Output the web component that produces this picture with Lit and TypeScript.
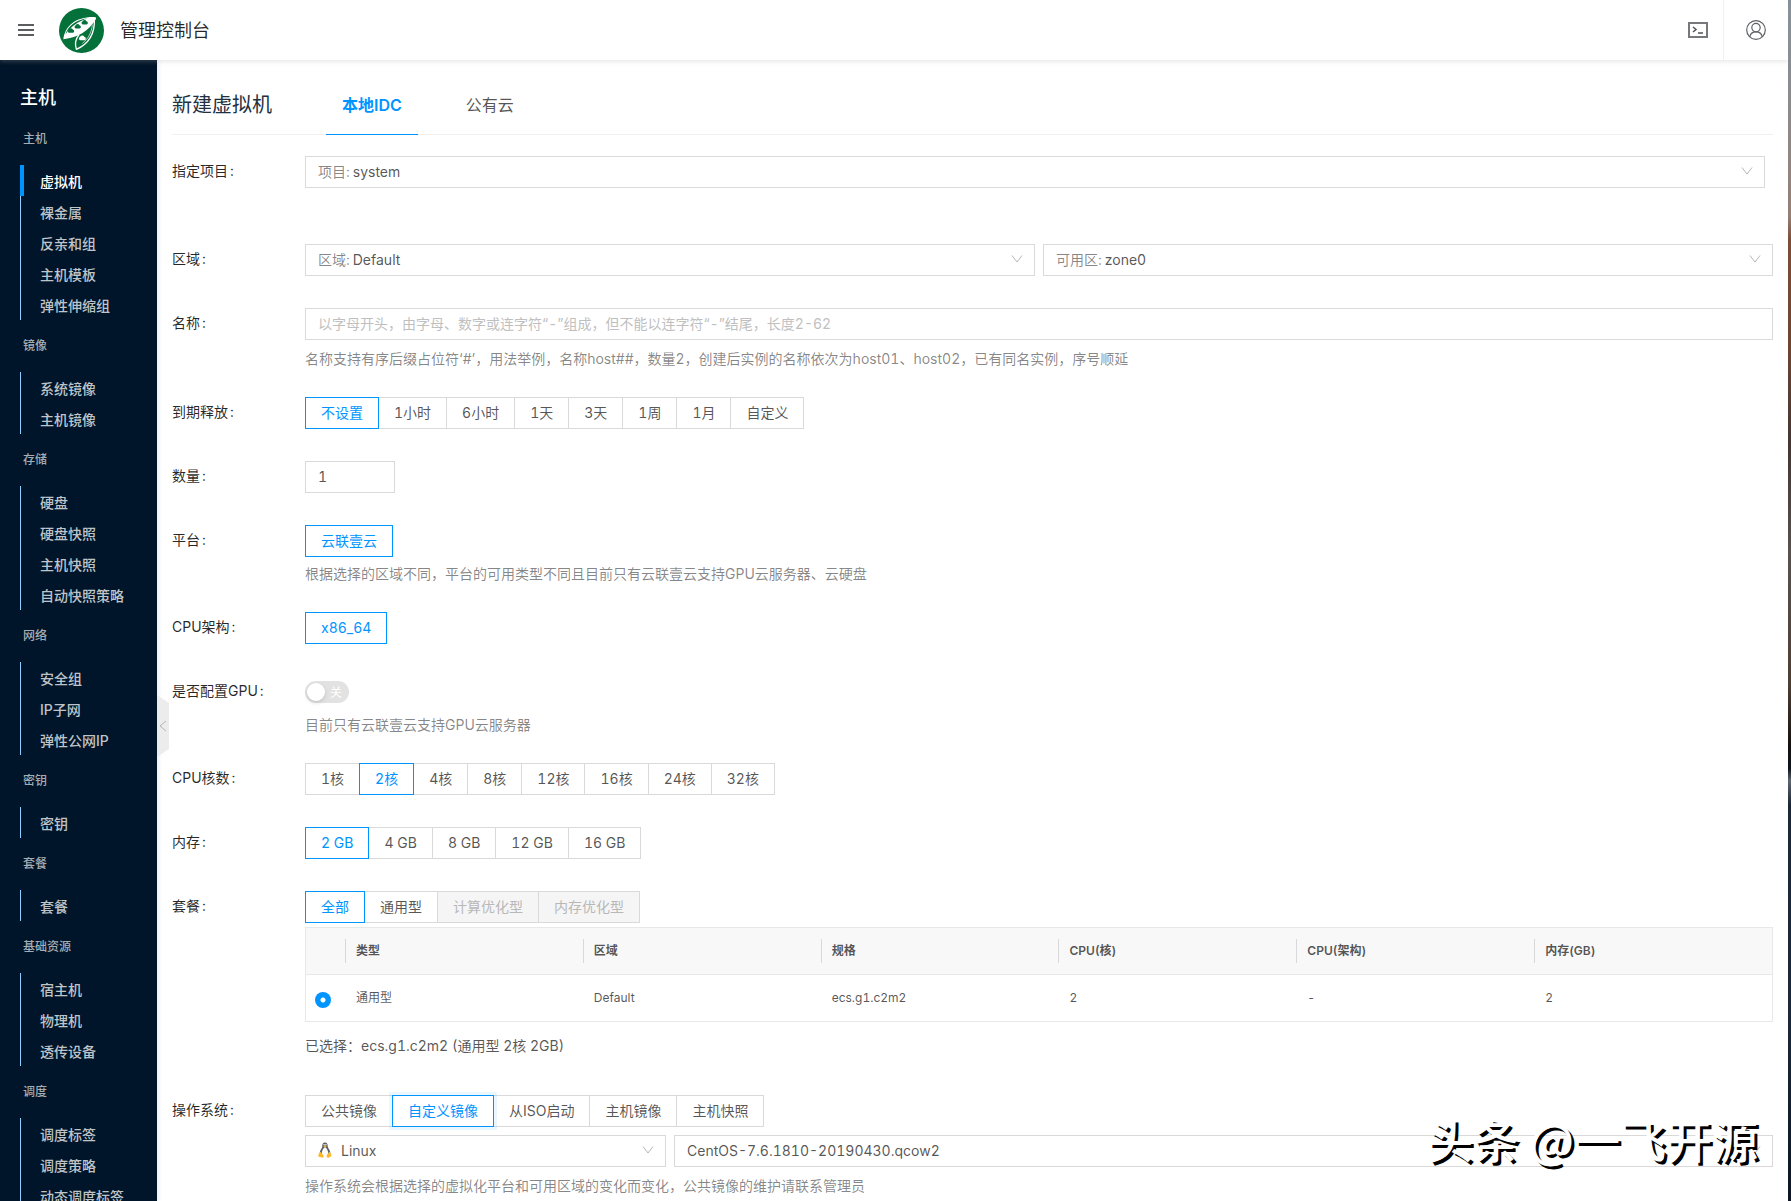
import { LitElement, html, css, svg, nothing, TemplateResult } from "lit";
import { customElement, state } from "lit/decorators.js";
import { classMap } from "lit/directives/class-map.js";

interface MenuGroup {
  title: string;
  items: string[];
}

interface Option {
  label: string;
  disabled?: boolean;
}

const MENU: MenuGroup[] = [
  { title: "主机", items: ["虚拟机", "裸金属", "反亲和组", "主机模板", "弹性伸缩组"] },
  { title: "镜像", items: ["系统镜像", "主机镜像"] },
  { title: "存储", items: ["硬盘", "硬盘快照", "主机快照", "自动快照策略"] },
  { title: "网络", items: ["安全组", "IP子网", "弹性公网IP"] },
  { title: "密钥", items: ["密钥"] },
  { title: "套餐", items: ["套餐"] },
  { title: "基础资源", items: ["宿主机", "物理机", "透传设备"] },
  { title: "调度", items: ["调度标签", "调度策略", "动态调度标签"] },
];

const toOptions = (...labels: string[]): Option[] => labels.map((label) => ({ label }));

const RELEASE = toOptions("不设置", "1小时", "6小时", "1天", "3天", "1周", "1月", "自定义");
const CORES = toOptions("1核", "2核", "4核", "8核", "12核", "16核", "24核", "32核");
const MEMORY = toOptions("2 GB", "4 GB", "8 GB", "12 GB", "16 GB");
const FLAVOR: Option[] = [
  { label: "全部" },
  { label: "通用型" },
  { label: "计算优化型", disabled: true },
  { label: "内存优化型", disabled: true },
];
const OS_SOURCE = toOptions("公共镜像", "自定义镜像", "从ISO启动", "主机镜像", "主机快照");

const COLUMNS = ["类型", "区域", "规格", "CPU(核)", "CPU(架构)", "内存(GB)"];
const SKU = ["通用型", "Default", "ecs.g1.c2m2", "2", "-", "2"];

const chevron = html`<svg class="chevron" viewBox="0 0 12 12" aria-hidden="true">
  <path d="M1 2.500 6 9l5-6.500" fill="none" stroke="currentColor" stroke-width="1" />
</svg>`;

const cloud = (x: number, y: number, fill: string, s = 1) => svg`
  <path transform="translate(${x} ${y}) scale(${s})" fill=${fill}
    d="M-5 5a4.500 4.500 0 0 1-1-8.500A6 6 0 0 1 5-4 4.800 4.800 0 0 1 6 5z" />`;

const logo = html`<svg class="logo" viewBox="28 24 135 135" aria-hidden="true">
  <circle cx="95.500" cy="91.500" r="67.500" fill="#04713a" />
  <path d="M41 118C46 78 78 50 133 51c7 0 8 3 4 9-20 32-50 52-96 58z" fill="#fff" />
  <path d="M47 104c8-26 32-44 67-49-28 9-50 24-67 49z" fill="#04713a" />
  ${cloud(64, 93, "#04713a", 1.1)}${cloud(84, 80, "#04713a", 1.1)}${cloud(105, 68, "#04713a", 1.1)}
  <path d="M134 56c2 40-14 74-54 92-5-16-3-30 8-44" fill="none" stroke="#fff" stroke-width="4" stroke-linejoin="round" />
  <path d="M128 74c-2 24-12 42-30 56" fill="none" stroke="#fff" stroke-width="2" />
  ${cloud(98, 115, "#fff", 1.2)}
</svg>`;

const tux = html`<svg class="tux" viewBox="0 0 14 16" aria-hidden="true">
  <path d="M7 .5C5 .5 4.200 2 4.300 3.700c.1 2-.8 2.700-1.700 4.300C1.500 10 1.500 12 2.500 14h9c1-2 1-4 0-6-1-1.700-1.800-2.400-1.800-4.200C9.700 1.800 9 .5 7 .5z" fill="#5b6068" />
  <path d="M7 5C5.500 6 3.800 8.500 3.800 11c0 2 1.200 3.500 3.200 3.500s3.200-1.500 3.200-3.500C10.200 8.500 8.500 6 7 5z" fill="#fafafa" />
  <path d="M5.200 4.200 7 3.300l1.800.9L7 5.600z" fill="#f5a623" />
  <circle cx="6.100" cy="2.700" r=".7" fill="#fff" /><circle cx="7.900" cy="2.700" r=".7" fill="#fff" />
  <path d="M2.500 9.800 5.500 13.500c.6 1.400-.4 2.400-1.700 2.100L.9 14.800c-.9-.3-.6-1.100-.4-1.700.2-1.200.4-2 2-3.300zM11.600 9.800 9 12.800c-.8 1.300-.3 2.900 1 2.900 1.200 0 1.800-.9 3-1.300.9-.4.7-1.200.2-1.700-.4-.7-.5-2-1.600-2.900z" fill="#fbb829" />
</svg>`;

@customElement("app-root")
export class AppRoot extends LitElement {
  @state() private picked: Record<string, string> = {
    release: "不设置",
    platform: "云联壹云",
    arch: "x86_64",
    cores: "2核",
    memory: "2 GB",
    flavor: "全部",
    os: "自定义镜像",
  };
  @state() private tab = "本地IDC";
  @state() private current = "虚拟机";

  static styles = css`
    :host {
      --primary: #0094ff;
      --line: #d9d9d9;
      --text: rgba(0, 0, 0, 0.68);
      --strong: rgba(0, 0, 0, 0.85);
      --muted: rgba(0, 0, 0, 0.48);
      display: flex;
      flex-direction: column;
      position: relative;
      height: 100vh;
      overflow: hidden;
      box-sizing: border-box;
      padding-right: 3px;
      background: #fff;
      color: var(--text);
      font-family: Inter, "Noto Sans CJK SC", sans-serif;
      font-size: 14px;
      line-height: 21px;
      font-variant-numeric: tabular-nums;
    }
    * {
      box-sizing: border-box;
    }
    button,
    input,
    select {
      font: inherit;
      font-variant-numeric: tabular-nums;
      color: inherit;
      margin: 0;
      padding: 0;
      border: 0;
      border-radius: 0;
      background: none;
      outline: 0;
    }
    a {
      color: inherit;
      text-decoration: none;
    }
    h1,
    h2,
    h3,
    p,
    ul {
      margin: 0;
      padding: 0;
      font-weight: 400;
      list-style: none;
    }
    .edge {
      position: absolute;
      inset: 0 0 0 auto;
      width: 3px;
      background: linear-gradient(
        #83909a 0%,
        #8d8a8a 10%,
        #967f74 18%,
        #7d4d36 20%,
        #6e4430 29%,
        #433633 37%,
        #57514f 46%,
        #4d3e33 57%,
        #15120f 62%,
        #0e141c 64%,
        #5d676f 65%,
        #1b2737 67%,
        #1b293b 84%,
        #0b1523 100%
      );
    }

    .header {
      display: flex;
      align-items: center;
      flex: none;
      height: 60px;
      z-index: 2;
      background: #fff;
      box-shadow: 0 2px 4px rgba(170, 170, 170, 0.25);
    }
    .header button {
      display: flex;
      align-items: center;
      justify-content: center;
      height: 60px;
    }
    .burger {
      width: 52px;
      color: #5c5d5f;
    }
    .burger svg {
      width: 16px;
      height: 12px;
    }
    .logo {
      width: 45px;
      height: 45px;
      margin: 0 16px 0 7px;
    }
    .brand {
      flex: 1;
      font-size: 18px;
      color: var(--strong);
    }
    .console {
      width: 50px;
    }
    .console svg {
      width: 20px;
      height: 16px;
    }
    .user {
      width: 65px;
      border-left: 1px solid #f0f0f0;
      color: #606266;
    }
    .user svg {
      width: 20px;
      height: 20px;
    }

    .body {
      display: flex;
      flex: 1;
      min-height: 0;
    }
    .sidebar {
      flex: none;
      width: 157px;
      padding: 22px 0 0 20px;
      overflow: hidden;
      background: #001529;
      color: #bfc4c9;
      box-shadow: 2px 0 4px rgba(0, 80, 160, 0.08);
    }
    .sidebar h2 {
      font-size: 18px;
      line-height: 31px;
      font-weight: 500;
      color: #fff;
    }
    .sidebar h3 {
      padding: 16px 3px;
      font-size: 12px;
      line-height: 20px;
      font-weight: 500;
      color: #a5adb4;
    }
    .sidebar a {
      display: block;
      padding: 2px 0 0 19px;
      border-left: 1px solid #8ccfff;
      line-height: 29px;
      font-weight: 500;
    }
    .sidebar a.active {
      padding-left: 16px;
      border-left: 4px solid var(--primary);
      color: #fff;
    }

    .rail {
      flex: none;
      align-self: center;
      width: 12px;
      height: 62px;
      margin-top: 190px;
      color: #b5b5b5;
    }
    .rail svg {
      display: block;
      width: 12px;
      height: 62px;
    }
    .main {
      flex: 1;
      min-width: 0;
      overflow-y: auto;
      scrollbar-width: none;
      padding: 16px 15px 0 3px;
    }
    .title {
      display: flex;
      height: 59px;
      margin-bottom: 17px;
      border-bottom: 1px solid #f0f0f0;
    }
    .title h1 {
      width: 154px;
      font-size: 20px;
      line-height: 58px;
      color: #22313f;
    }
    .tabs {
      display: flex;
      gap: 32px;
    }
    .tabs button {
      height: 59px;
      padding: 0 16px;
      font-size: 16px;
      border-bottom: 1px solid transparent;
    }
    .tabs button.active {
      font-weight: 600;
      color: var(--primary);
      border-bottom-color: var(--primary);
    }

    .row {
      display: grid;
      grid-template-columns: 133px minmax(0, 1fr);
      margin-bottom: 24px;
    }
    .row.wide {
      margin-bottom: 48px;
    }
    .row.wide .line {
      padding-right: 8px;
    }
    .caption {
      line-height: 38px;
      color: var(--strong);
    }
    .caption::after {
      content: ":";
      margin-left: 2px;
    }
    .line {
      display: flex;
      align-items: center;
      gap: 8px;
      min-height: 40px;
    }
    .help {
      padding-top: 2px;
      color: var(--muted);
    }
    .help.far {
      padding-top: 4px;
    }
    .box {
      display: flex;
      align-items: center;
      flex: 1;
      min-width: 0;
      height: 32px;
      padding: 0 11px 2px 12px;
      border: 1px solid var(--line);
    }
    .box.os {
      flex: none;
      width: 361px;
    }
    .box select {
      appearance: none;
      flex: 1;
      min-width: 0;
      height: 28px;
    }
    .prefix {
      padding-right: 3px;
      color: var(--muted);
    }
    .chevron {
      flex: none;
      width: 12px;
      height: 12px;
      color: #b8b8b8;
      pointer-events: none;
    }
    .tux {
      width: 14px;
      height: 16px;
      margin-right: 9px;
    }
    .field {
      flex: 1;
      height: 32px;
      padding: 0 12px 2px;
      border: 1px solid var(--line);
    }
    .field.small {
      flex: none;
      width: 90px;
    }
    .field::placeholder {
      color: #bfbfbf;
      opacity: 1;
    }

    .segments {
      display: flex;
    }
    .segment {
      position: relative;
      height: 32px;
      padding: 0 15px;
      margin-left: -1px;
      border: 1px solid var(--line);
      line-height: 29px;
      white-space: nowrap;
      cursor: pointer;
    }
    .segment:first-child {
      margin-left: 0;
    }
    .segment input {
      position: absolute;
      inset: 0;
      opacity: 0;
    }
    .segment.on {
      z-index: 1;
      color: var(--primary);
      border-color: var(--primary);
    }
    .segment.glow {
      box-shadow: 0 0 0 3px rgba(0, 148, 255, 0.08);
    }
    .segment.off {
      color: #b8b8b8;
      background: #f5f5f5;
      cursor: not-allowed;
    }

    .switch {
      display: flex;
      align-items: center;
      position: relative;
      width: 44px;
      height: 22px;
      padding: 0 2px;
      border-radius: 11px;
      background: #e2e2e2;
      color: #fff;
      font-size: 12px;
      gap: 5px;
    }
    .switch input {
      position: absolute;
      inset: 0;
      opacity: 0;
    }
    .knob {
      width: 18px;
      height: 18px;
      border-radius: 50%;
      background: #fff;
      box-shadow: 0 2px 4px rgba(0, 35, 11, 0.15);
    }

    table {
      width: 100%;
      table-layout: fixed;
      border-collapse: separate;
      border-spacing: 0;
      border: 1px solid #e8e8e8;
      font-size: 12px;
    }
    th,
    td {
      height: 46px;
      padding: 0 0 1px 11px;
      text-align: left;
      vertical-align: middle;
    }
    th {
      height: 47px;
      font-weight: 600;
      background: #f8f8f9;
      border-bottom: 1px solid #e8e8e8;
      padding: 0;
    }
    th .cell {
      display: block;
      padding-left: 10px;
      border-left: 1px solid #d9d9d9;
      line-height: 24px;
    }
    .pick {
      width: 39px;
    }
    td.pick {
      padding: 4px 0 0 9px;
    }
    .pick input {
      display: block;
      appearance: none;
      width: 16px;
      height: 16px;
      border-radius: 50%;
      background: radial-gradient(circle, #fff 2px, var(--primary) 3px);
    }
    .chosen {
      padding: 4px 0 1px;
      line-height: 40px;
    }

    .watermark {
      position: absolute;
      right: 33px;
      bottom: 30px;
      z-index: 3;
      font: 500 46px/66px "Noto Sans CJK SC", sans-serif;
      color: #fff;
      text-shadow: 3px 3px 0 #000;
      white-space: nowrap;
      pointer-events: none;
    }
  `;

  private choose(key: string, value: string) {
    this.picked = { ...this.picked, [key]: value };
  }

  private segments(key: string, options: Option[]) {
    return html`<div class="segments" role="radiogroup" aria-labelledby="cap-${key}">
      ${options.map(({ label, disabled }) => {
        const on = this.picked[key] === label;
        return html`<label class=${classMap({ segment: true, on, off: !!disabled, glow: on && key === "os" })}>
          <input type="radio" name=${key} .checked=${on} ?disabled=${!!disabled} @change=${() => this.choose(key, label)} />${label}
        </label>`;
      })}
    </div>`;
  }

  private row(key: string, caption: string, line: unknown, extra: unknown = nothing, wide = false): TemplateResult {
    return html`<div class=${classMap({ row: true, wide })}>
      <label class="caption" id="cap-${key}" for=${key}>${caption}</label>
      <div>
        <div class="line">${line}</div>
        ${extra}
      </div>
    </div>`;
  }

  private dropdown(id: string, value: string, prefix: string, icon: unknown = nothing, cls = "") {
    return html`<div class="box ${cls}">
      ${icon}${prefix ? html`<label class="prefix" for=${id}>${prefix}</label>` : nothing}
      <select id=${id} aria-label=${prefix || value}>
        <option>${value}</option>
      </select>
      ${chevron}
    </div>`;
  }

  private renderHeader() {
    return html`<header class="header">
      <button class="burger" aria-label="菜单">
        <svg viewBox="0 0 16 12"><path d="M0 1h16M0 6h16M0 11h16" stroke="currentColor" stroke-width="2" /></svg>
      </button>
      ${logo}
      <span class="brand">管理控制台</span>
      <button class="console" aria-label="终端">
        <svg viewBox="0 0 20 16">
          <rect x="1" y="1" width="18" height="14" fill="none" stroke="#77787c" stroke-width="2" />
          <path d="M5 5l3 2.500L5 10M10 11h5" fill="none" stroke="#505256" stroke-width="1.500" />
        </svg>
      </button>
      <button class="user" aria-label="用户">
        <svg viewBox="0 0 20 20" fill="none" stroke="currentColor" stroke-width="1.200">
          <circle cx="10" cy="10" r="9.300" />
          <circle cx="10" cy="7.600" r="4.200" />
          <path d="M3.800 16.800c.6-3.200 3-5 6.200-5s5.600 1.800 6.200 5" />
        </svg>
      </button>
    </header>`;
  }

  private renderSidebar() {
    return html`<nav class="sidebar">
      <h2>主机</h2>
      ${MENU.map(
        (group) => html`<h3>${group.title}</h3>
          <ul>
            ${group.items.map(
              (item) => html`<li>
                <a href="#" class=${classMap({ active: item === this.current })} @click=${(e: Event) => {
                  e.preventDefault();
                  this.current = item;
                }}>${item}</a>
              </li>`
            )}
          </ul>`
      )}
    </nav>`;
  }

  private renderTable() {
    return html`<table>
        <thead>
          <tr>
            <th class="pick"></th>
            ${COLUMNS.map((c) => html`<th><span class="cell">${c}</span></th>`)}
          </tr>
        </thead>
        <tbody>
          <tr>
            <td class="pick"><input type="radio" name="sku" aria-label="ecs.g1.c2m2" checked /></td>
            ${SKU.map((c) => html`<td>${c}</td>`)}
          </tr>
        </tbody>
      </table>
      <p class="chosen">已选择：ecs.g1.c2m2 (通用型 2核 2GB)</p>`;
  }

  render() {
    return html`
      ${this.renderHeader()}
      <div class="body">
        ${this.renderSidebar()}
        <button class="rail" aria-label="收起">
          <svg viewBox="0 0 12 62">
            <path d="M0 0 12 8v46L0 62z" fill="#ececec" />
            <path d="M9 26 3 31l6 5" fill="none" stroke="currentColor" />
          </svg>
        </button>
        <main class="main">
          <div class="title">
            <h1>新建虚拟机</h1>
            <div class="tabs" role="tablist">
              ${["本地IDC", "公有云"].map(
                (t) => html`<button role="tab" class=${classMap({ active: t === this.tab })} @click=${() => (this.tab = t)}>${t}</button>`
              )}
            </div>
          </div>
          <form @submit=${(e: Event) => e.preventDefault()}>
            ${this.row("project", "指定项目", this.dropdown("project", "system", "项目:"), nothing, true)}
            ${this.row("region", "区域", [this.dropdown("region", "Default", "区域:"), this.dropdown("zone", "zone0", "可用区:")])}
            ${this.row(
              "name",
              "名称",
              html`<input id="name" class="field" type="text" placeholder="以字母开头，由字母、数字或连字符“-”组成，但不能以连字符“-”结尾，长度2-62" />`,
              html`<p class="help far">名称支持有序后缀占位符‘#’，用法举例，名称host##，数量2，创建后实例的名称依次为host01、host02，已有同名实例，序号顺延</p>`
            )}
            ${this.row("release", "到期释放", this.segments("release", RELEASE))}
            ${this.row("count", "数量", html`<input id="count" class="field small" type="text" inputmode="numeric" value="1" />`)}
            ${this.row(
              "platform",
              "平台",
              this.segments("platform", toOptions("云联壹云")),
              html`<p class="help">根据选择的区域不同，平台的可用类型不同且目前只有云联壹云支持GPU云服务器、云硬盘</p>`
            )}
            ${this.row("arch", "CPU架构", this.segments("arch", toOptions("x86_64")))}
            ${this.row(
              "gpu",
              "是否配置GPU",
              html`<label class="switch"><input id="gpu" type="checkbox" role="switch" /><span class="knob"></span>关</label>`,
              html`<p class="help">目前只有云联壹云支持GPU云服务器</p>`
            )}
            ${this.row("cores", "CPU核数", this.segments("cores", CORES))}
            ${this.row("memory", "内存", this.segments("memory", MEMORY))}
            ${this.row("flavor", "套餐", this.segments("flavor", FLAVOR), this.renderTable())}
            ${this.row(
              "os",
              "操作系统",
              this.segments("os", OS_SOURCE),
              html`<div class="line">
                  ${this.dropdown("distro", "Linux", "", tux, "os")}
                  ${this.dropdown("image", "CentOS-7.6.1810-20190430.qcow2", "")}
                </div>
                <p class="help far">操作系统会根据选择的虚拟化平台和可用区域的变化而变化，公共镜像的维护请联系管理员</p>`
            )}
          </form>
        </main>
      </div>
      <div class="edge"></div>
      <div class="watermark">头条 @一飞开源</div>
    `;
  }
}
